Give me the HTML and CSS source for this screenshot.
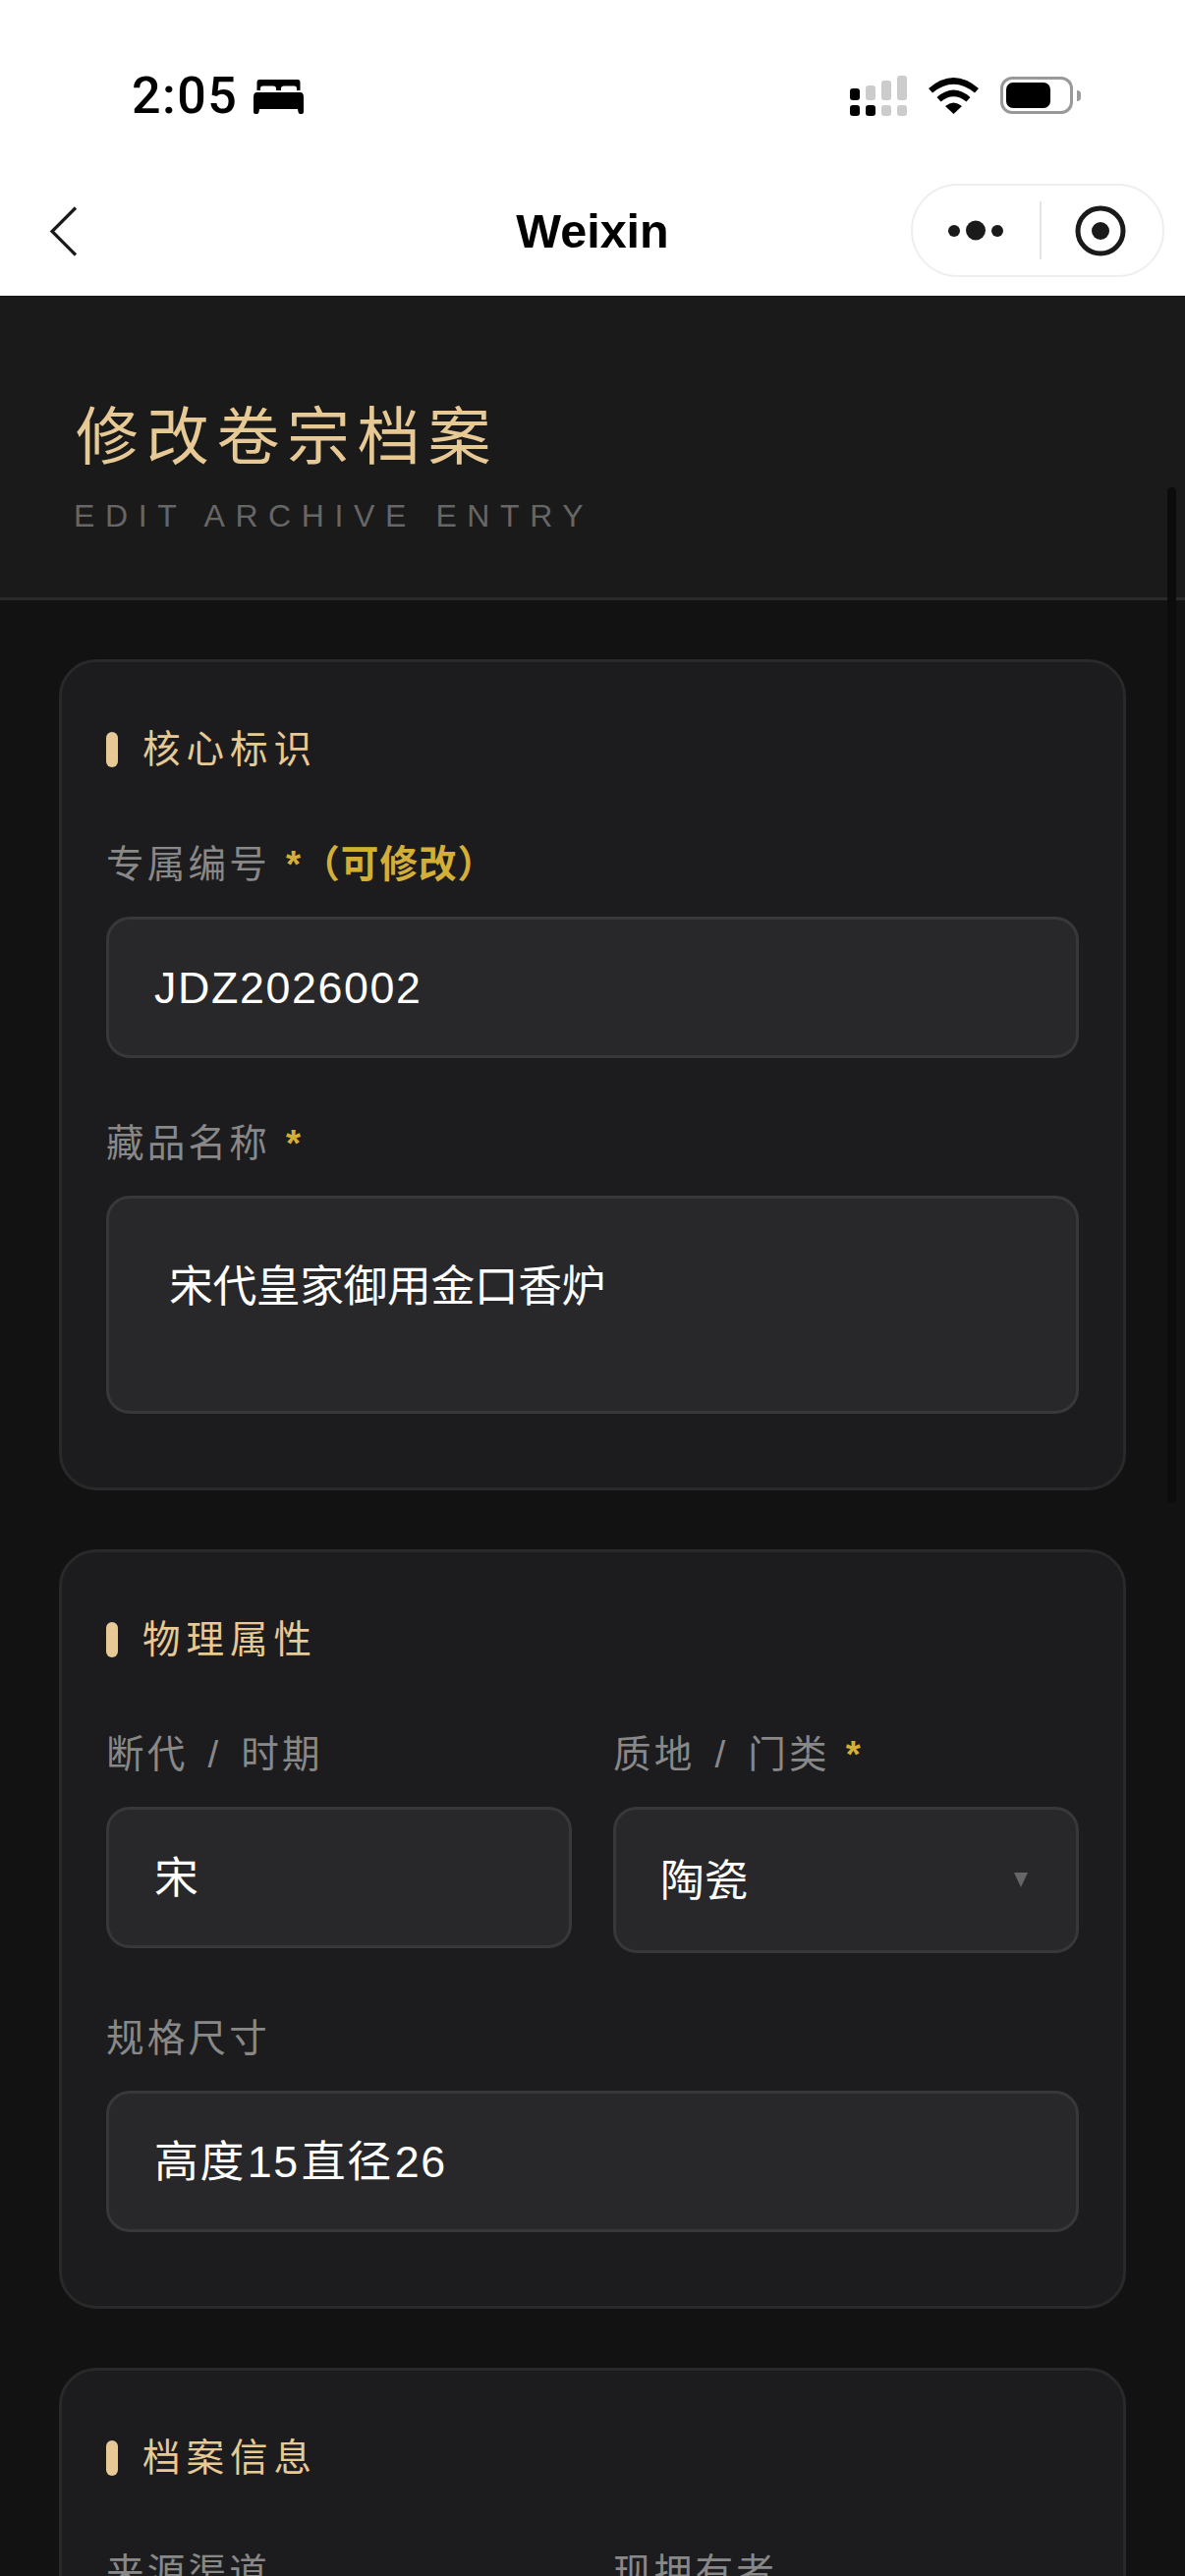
FILE: index.html
```html
<!DOCTYPE html>
<html lang="zh-CN">
  <head>
    <meta charset="UTF-8" />
    <meta name="viewport" content="width=device-width, initial-scale=1.0" />
    <title>修改卷宗档案</title>
    <link rel="stylesheet" href="styles.css">
  </head>
  <body>
    <div class="top">
      <div class="status">
        <div class="status-left">
          <span class="time">2:05</span>
          <svg class="bed" width="51" height="35" viewBox="0 0 51 35">
            <path fill="#000" d="M6 0H45Q47.5 0 47.5 3V11H44V9Q44 6.5 41.5 6.5H31Q28 6.5 28 9V11H23V9Q23 6.5 20 6.5H9.5Q7 6.5 7 9V11H3.5V3Q3.500 0 6 0ZM3.500 13H47.500Q51 13 51 18V33Q51 35 49 35H47.500Q46 35 45.500 33L45 30H6L5.500 33Q5 35 3.500 35H2Q0 35 0 33V18Q0 13 3.500 13Z" />
          </svg>
        </div>
        <div class="status-right">
          <svg width="58" height="41" viewBox="0 0 58 41">
            <rect x="0" y="13" width="10" height="12" rx="3" fill="#000" />
            <rect x="16" y="10" width="10" height="15" rx="3" fill="#ccc" />
            <rect x="32" y="5" width="10" height="20" rx="3" fill="#ccc" />
            <rect x="48" y="0" width="10" height="25" rx="3" fill="#ccc" />
            <rect x="0" y="30" width="10" height="11" rx="3" fill="#000" />
            <rect x="16" y="30" width="10" height="11" rx="3" fill="#000" />
            <rect x="32" y="30" width="10" height="11" rx="3" fill="#ccc" />
            <rect x="48" y="30" width="10" height="11" rx="3" fill="#ccc" />
          </svg>
          <svg width="51" height="37" viewBox="0 0 51 37">
            <path fill="#000" d="M0 11Q25.500 -11 51 11L47 15.500Q25.500 -2 4 15.500ZM8.500 20Q25.500 5 42.500 20L38.500 24.500Q25.500 14 12.500 24.500ZM17 29Q25.500 22 34 29L25.500 37Z" />
          </svg>
          <div class="battery">
            <div class="battery-body"><div class="battery-fill"></div></div>
            <div class="battery-nub"></div>
          </div>
        </div>
      </div>
      <div class="nav">
        <svg class="back" width="29" height="51" viewBox="0 0 29 51">
          <path fill="none" stroke="#1a1a1a" stroke-width="3.200" d="M27 1.500L3 25.500L27 49.500" />
        </svg>
        <div class="nav-title">Weixin</div>
        <div class="capsule">
          <svg width="58" height="24" viewBox="0 0 58 24">
            <circle cx="6" cy="12" r="6" fill="#1a1a1a" />
            <circle cx="28" cy="11.500" r="10" fill="#1a1a1a" />
            <circle cx="50" cy="12" r="6" fill="#1a1a1a" />
          </svg>
          <div class="capsule-line"></div>
          <svg width="52" height="52" viewBox="0 0 52 52">
            <circle cx="26" cy="26" r="23" fill="none" stroke="#1a1a1a" stroke-width="5" />
            <circle cx="26" cy="26" r="9" fill="#1a1a1a" />
          </svg>
        </div>
      </div>
    </div>

    <div class="page">
      <div class="header">
        <h1>修改卷宗档案</h1>
        <div class="sub">EDIT ARCHIVE ENTRY</div>
      </div>

      <div class="form">
        <div class="card">
          <div class="card-title"><span class="bar"></span><span class="card-name">核心标识</span></div>
          <div class="field">
            <div class="label">专属编号 <span class="req">*</span><b class="note">（可修改）</b></div>
            <div class="input">JDZ2026002</div>
          </div>
          <div class="field">
            <div class="label">藏品名称 <span class="req">*</span></div>
            <div class="textarea">宋代皇家御用金口香炉</div>
          </div>
        </div>

        <div class="card">
          <div class="card-title"><span class="bar"></span><span class="card-name">物理属性</span></div>
          <div class="row">
            <div class="field">
              <div class="label">断代 / 时期</div>
              <div class="input">宋</div>
            </div>
            <div class="field">
              <div class="label">质地 / 门类 <span class="req">*</span></div>
              <div class="input select">陶瓷<span class="arrow"></span></div>
            </div>
          </div>
          <div class="field">
            <div class="label">规格尺寸</div>
            <div class="input">高度<span class="num">15</span>直径<span class="num">26</span></div>
          </div>
        </div>

        <div class="card">
          <div class="card-title"><span class="bar"></span><span class="card-name">档案信息</span></div>
          <div class="row">
            <div class="field">
              <div class="label">来源渠道</div>
              <div class="input"></div>
            </div>
            <div class="field">
              <div class="label">现拥有者</div>
              <div class="input"></div>
            </div>
          </div>
        </div>
      </div>
    </div>
    <div class="scroll"></div>
  </body>
</html>
```

FILE: styles.css
```css
* {
  box-sizing: border-box;
}

html,
body {
  margin: 0;
  height: 2622px;
  overflow: hidden;
}

body {
  position: relative;
  background: #121212;
  font-family: "Liberation Sans", "Noto Sans CJK SC", sans-serif;
}

/* phone chrome */
.top {
  height: 301px;
  background: #fff;
}
.status {
  height: 170px;
  padding: 77px 106px 0 134px;
  display: flex;
  justify-content: space-between;
  align-items: flex-start;
}
.status-left {
  display: flex;
  align-items: center;
  gap: 16px;
  height: 41px;
}
.time {
  font-family: Roboto, sans-serif;
  font-size: 52px;
  font-weight: 500;
  line-height: 41px;
  letter-spacing: 1.500px;
  color: #000;
}
.bed {
  margin-top: 2px;
}
.status-right {
  display: flex;
  align-items: flex-start;
  gap: 22px;
}
.status-right svg:nth-child(2) {
  margin-top: 2px;
}
.battery {
  display: flex;
  align-items: center;
  gap: 4px;
  margin-top: 1px;
}
.battery-body {
  width: 74px;
  height: 38px;
  padding: 3px;
  border: 3px solid #999;
  border-radius: 12px;
}
.battery-fill {
  width: 45px;
  height: 100%;
  background: #000;
  border-radius: 7px;
}
.battery-nub {
  width: 4px;
  height: 11px;
  background: #999;
  border-radius: 0 4px 4px 0;
}

.nav {
  height: 131px;
  padding: 17px 21px 0;
  display: grid;
  grid-template-columns: minmax(0, 1fr) auto minmax(0, 1fr);
  align-items: start;
}
.back {
  margin: 23px 0 0 29px;
}
.nav-title {
  font-size: 48.500px;
  font-weight: bold;
  line-height: 96px;
  color: #000;
}
.capsule {
  justify-self: end;
  flex: none;
  width: 258px;
  height: 95px;
  padding: 0 37px 0 36px;
  display: flex;
  align-items: center;
  justify-content: space-between;
  border: 2px solid #eee;
  border-radius: 48px;
}
.capsule-line {
  width: 2px;
  height: 59px;
  background: #e5e5e5;
}

/* page */
.header {
  height: 310px;
  padding: 98px 0 0 75px;
  background: #1a1a1a;
  border-bottom: 3px solid #2a2a2a;
}
h1 {
  margin: 0 0 0 2px;
  font-size: 64px;
  font-weight: normal;
  line-height: 92px;
  letter-spacing: 7.700px;
  color: #e6c994;
}
.sub {
  margin-top: 15px;
  font-size: 32px;
  line-height: 38px;
  letter-spacing: 10.600px;
  color: #666;
}

.form {
  padding: 60px 60px 0;
  display: flex;
  flex-direction: column;
  gap: 60px;
}
.card {
  padding: 66px 45px 75px;
  display: flex;
  flex-direction: column;
  background: #1c1c1e;
  border: 3px solid #29292b;
  border-radius: 38px;
}
.card-title {
  display: flex;
  align-items: center;
  gap: 25px;
  height: 46px;
  margin-bottom: 7px;
  font-size: 38.600px;
  letter-spacing: 5.900px;
  color: #e6c994;
}
.card-name {
  margin-bottom: 8px;
}
.bar {
  width: 12px;
  height: 36px;
  background: #e6c994;
  border-radius: 6px;
}
.field {
  margin-top: 63px;
}
.label {
  height: 48px;
  font-size: 38.600px;
  line-height: 48px;
  letter-spacing: 3.200px;
  word-spacing: 6px;
  color: #888;
}
.req {
  margin-left: -4px;
  font-weight: bold;
  color: #d4af37;
}
.note {
  margin-left: -2px;
  letter-spacing: 1px;
  color: #d4af37;
}
.input,
.textarea {
  margin-top: 29px;
  padding: 0 46px;
  height: 144px;
  background: #28282a;
  border: 3px solid #38383a;
  border-radius: 24px;
  font-size: 44.800px;
  line-height: 138px;
  letter-spacing: 1.600px;
  color: #fff;
}
.textarea {
  height: 222px;
  padding: 59px 61px 0;
  line-height: 60px;
  letter-spacing: -0.400px;
}
.select {
  display: flex;
  justify-content: space-between;
  align-items: center;
  height: 149px;
  padding-left: 45px;
  letter-spacing: 0;
}
.arrow {
  width: 0;
  height: 0;
  margin-right: 3px;
  border-left: 7px solid transparent;
  border-right: 7px solid transparent;
  border-top: 15px solid #666;
}
.num {
  margin: 0 2px;
}
.row {
  display: grid;
  grid-template-columns: 1fr 1fr;
  gap: 42px;
}

.scroll {
  position: absolute;
  top: 496px;
  right: 9px;
  width: 9px;
  height: 1034px;
  background: #0c0c0c;
  border-radius: 5px;
}
```
